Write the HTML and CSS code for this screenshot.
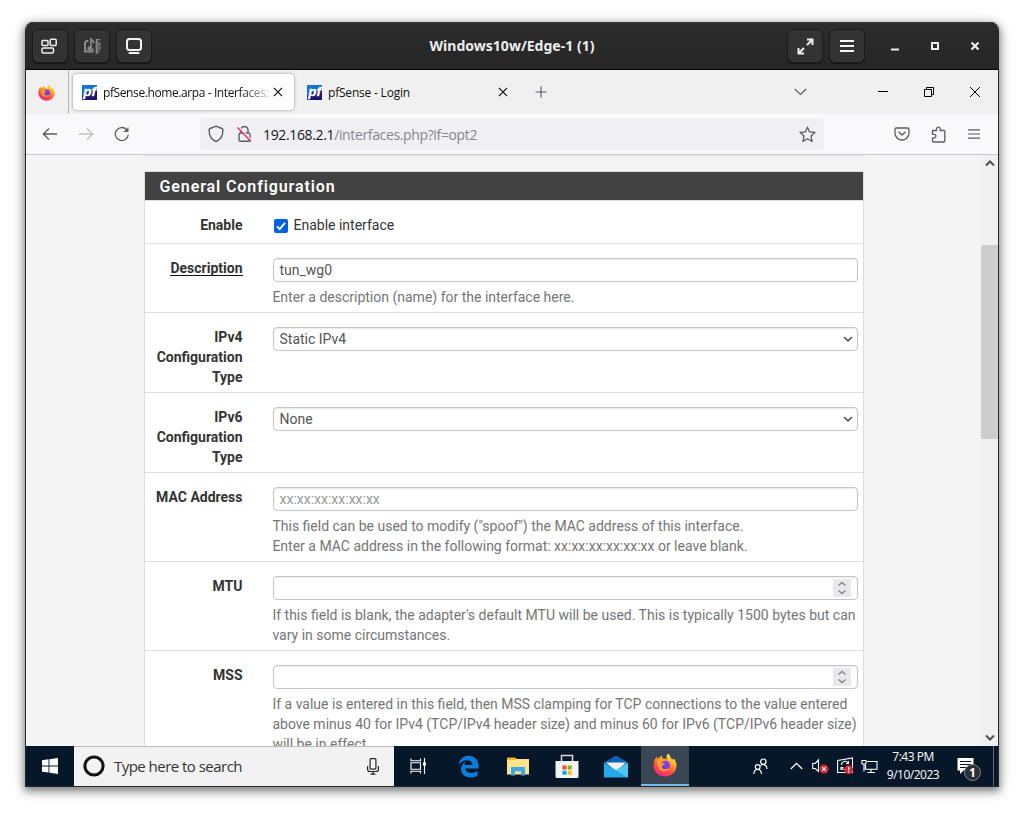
FILE: index.html
```html
<!DOCTYPE html>
<html lang="en">
<head>
<meta charset="utf-8">
<title>Windows10w/Edge-1 (1)</title>
<link rel="stylesheet" href="styles.css">
</head>
<body>
<svg width="0" height="0" class="defs">
  <defs>
    <linearGradient id="flame" x1="0.8" y1="0" x2="0.25" y2="1"><stop offset="0" stop-color="#fff44f"/><stop offset=".35" stop-color="#ffa62a"/><stop offset=".65" stop-color="#ff4f3c"/><stop offset="1" stop-color="#f5208a"/></linearGradient>
    <linearGradient id="globe" x1="0" y1="1" x2="1" y2="0"><stop offset="0" stop-color="#5b3fd6"/><stop offset="1" stop-color="#a03be8"/></linearGradient>
    <linearGradient id="pfbg" x1="0" y1="0" x2="0.5" y2="1"><stop offset="0" stop-color="#1475cf"/><stop offset=".5" stop-color="#1a6fd0"/><stop offset=".6" stop-color="#1f1a80"/><stop offset="1" stop-color="#1c1468"/></linearGradient>
    <symbol id="firefox" viewBox="0 0 24 24">
      <path fill="url(#flame)" d="M15 .5c1.500 1.200 2.600 2.900 3 4.800 1 .4 1.800.9 2.400 1.500l.5-1.300c2 2.700 3 5.200 2.600 8.300C22.700 19.600 18 23.500 12 23.500 5.700 23.500.6 18.700.5 12.500c0-3.200 1-6.300 3.300-9l.3 2.300C5 4.900 6 4.600 6.800 4.600L8.700 2.300l.8 3.200c1.600 0 3.200.4 4.200 1.200C13.200 4.300 13.500 2.200 15 .5z"/>
      <circle cx="12.600" cy="12.300" r="4.500" fill="url(#globe)"/>
      <path fill="#ff9b2b" d="M4 7.500c2.500-1.800 5.500-1.800 7.700.3-1.700.3-2.800 1.200-2.900 2.300l3.200.5c-.4 1.400-2 1.500-3.200 2.500-.5 2.300 1.500 3.500 3.700 3.100 1.200-.3 2.200-1 3.500-.7-1.200 2.600-4.400 3.700-7.200 2.500C4.900 16.200 3.400 11.500 4 7.500z"/>
    </symbol>
    <symbol id="pf" viewBox="0 0 15 15">
      <rect width="15" height="15" fill="url(#pfbg)"/>
      <text x="1.200" y="11" class="pf-text" textLength="12.800" lengthAdjust="spacingAndGlyphs">pf</text>
    </symbol>
    <symbol id="close" viewBox="0 0 10 10"><path d="M.9.9l8.200 8.200M9.100.9L.9 9.100" fill="none" stroke="currentColor" stroke-width="1.200"/></symbol>
    <symbol id="select-arrow" viewBox="0 0 10 6"><path d="M1 1l4 3.800L9 1" fill="none" stroke="currentColor" stroke-width="1.700"/></symbol>
    <symbol id="spin" viewBox="0 0 18 18"><path d="M5.500 6.500L9 3.500l3.500 3M5.500 11.500l3.500 3 3.500-3" fill="none" stroke="#85858c" stroke-width="1.400"/></symbol>
  </defs>
</svg>

<main class="window">
  <header class="titlebar">
    <div class="tb-group tb-left">
      <span class="tb-btn"><svg width="17" height="17" viewBox="0 0 17 17" fill="none" stroke="#eee" stroke-width="1.500"><rect x="1" y="2.500" width="6" height="5" rx="1"/><rect x="9.200" y="1.300" width="6" height="6.200" rx="1"/><rect x="1" y="10" width="11.500" height="5" rx="1.200"/></svg></span>
      <span class="tb-btn"><svg width="18" height="17" viewBox="0 0 18 17" fill="none" stroke="#898989"><path d="M5.500 3H3.500L2 4.500v9h7.500V10.500" stroke-width="2"/><path d="M8 11V1l3.300 4" stroke-width="1.700"/><circle cx="6.500" cy="10.500" r="1.800" fill="#898989"/><path d="M13.700 1v15" stroke-width="2"/><path d="M14 1.700h3.500M15 5h2v2h-2M15 9h2v2h-2M15 13.500h2" stroke-width="1.200"/></svg></span>
      <span class="tb-btn"><svg width="18" height="18" viewBox="0 0 18 18" fill="none" stroke="#f2f2f2" stroke-width="2"><rect x="2" y="2" width="14" height="11" rx="2.500"/><path d="M4.500 16h9" stroke-linecap="round"/></svg></span>
    </div>
    <h1 class="title">Windows10w/Edge-1 (1)</h1>
    <div class="tb-group tb-right">
      <span class="tb-btn"><svg width="17" height="17" viewBox="0 0 17 17" fill="none" stroke="#eee" stroke-width="2"><path d="M10 1.500h5.500V7M15 2l-5 5M1.500 10v5.500H7M2 15l5-5"/></svg></span>
      <span class="tb-btn"><svg width="16" height="14" viewBox="0 0 16 14" fill="none" stroke="#f4f4f4" stroke-width="2"><path d="M1 2h14M1 7h14M1 12h14"/></svg></span>
      <span class="wm"><svg width="10" height="10" viewBox="0 0 10 10"><path d="M1 8.500h8" stroke="#eee" stroke-width="2"/></svg></span>
      <span class="wm"><svg width="10" height="10" viewBox="0 0 10 10"><rect x="2" y="2" width="6" height="6" fill="none" stroke="#eee" stroke-width="2"/></svg></span>
      <span class="wm"><svg width="10" height="10" viewBox="0 0 10 10"><path d="M1.500 1.500l7 7M8.500 1.500l-7 7" stroke="#eee" stroke-width="2.200"/></svg></span>
    </div>
  </header>

  <nav class="tabs">
    <span class="pinned"><svg width="17" height="17"><use href="#firefox"/></svg></span>
    <div class="tab active"><svg width="15" height="15"><use href="#pf"/></svg><span class="tab-label fade">pfSense.home.arpa - Interfaces:</span><svg width="10" height="10"><use href="#close"/></svg></div>
    <div class="tab"><svg width="15" height="15"><use href="#pf"/></svg><span class="tab-label">pfSense - Login</span><svg width="10" height="10"><use href="#close"/></svg></div>
    <svg class="plus" width="12" height="12" viewBox="0 0 12 12"><path d="M6 .5v11M.5 6h11" stroke="#5b5b66" stroke-width="1.200"/></svg>
    <div class="win-controls">
      <svg class="chev" width="13" height="8" viewBox="0 0 13 8"><path d="M.8 1l5.700 5.500L12.200 1" fill="none" stroke="#5b5b66" stroke-width="1.200"/></svg>
      <span class="wc"><svg width="10" height="10" viewBox="0 0 10 10"><path d="M0 4.500h10" stroke="#000"/></svg></span>
      <span class="wc"><svg width="10" height="10" viewBox="0 0 10 10" fill="none" stroke="#000"><path d="M.5 2.500h7v7h-7zM2.500 2.500v-2h7v7h-2"/></svg></span>
      <span class="wc"><svg width="10" height="10" viewBox="0 0 10 10"><path d="M0 0l10 10M10 0L0 10" stroke="#000"/></svg></span>
    </div>
  </nav>

  <div class="toolbar">
    <span class="tool"><svg width="16" height="14" viewBox="0 0 16 14" fill="none" stroke="#5b5b66" stroke-width="1.300"><path d="M15 7H1.500M7 1.500L1.300 7 7 12.500"/></svg></span>
    <span class="tool"><svg width="16" height="14" viewBox="0 0 16 14" fill="none" stroke="#bfbfc5" stroke-width="1.300"><path d="M1 7h13.500M9 1.500l5.700 5.500L9 12.500"/></svg></span>
    <span class="tool"><svg width="16" height="16" viewBox="0 0 16 16" fill="none" stroke="#5b5b66" stroke-width="1.300"><path d="M14.300 8.700A6.500 6.500 0 1 1 12.500 3.500l1 1"/><path d="M14.500 1v5h-5z" fill="#5b5b66" stroke="none"/></svg></span>
    <div class="urlbar">
      <svg width="16" height="18" viewBox="0 0 16 18" fill="none" stroke="#5b5b66" stroke-width="1.400"><path d="M8 1.200l6 2.300c.9.300.9.600.9 1.500 0 4.500-1.400 9.500-6.900 11.500C2.500 14.500 1.100 9.500 1.100 5c0-.9 0-1.200.9-1.500z"/></svg>
      <svg class="lock" width="15" height="18" viewBox="0 0 15 18" fill="none" stroke="#5b5b66" stroke-width="1.400"><rect x="2" y="8" width="11" height="8.300" rx="1.500"/><path d="M4 8V5a3.500 3.500 0 0 1 7 0v3"/><path d="M2.500 2.500L14 15" stroke="#f0f0f4" stroke-width="1.500"/><path d="M.5 2.500L14 16.500" stroke="#e22850" stroke-width="1.300"/></svg>
      <span class="url">192.168.2.1<span class="path">/interfaces.php?if=opt2</span></span>
      <svg class="star" width="17" height="17" viewBox="0 0 17 17" fill="none" stroke="#5b5b66" stroke-width="1.300" stroke-linejoin="round"><path d="M8.500 1.200l2.100 4.700 5.300.6-3.900 3.500 1.100 5.400-4.600-2.700-4.600 2.700L5 10 1.100 6.500l5.300-.6z"/></svg>
    </div>
    <div class="tools-right">
      <span class="tool"><svg width="16" height="14" viewBox="0 0 16 14" fill="none" stroke="#5b5b66" stroke-width="1.300"><path d="M2.200 1h11.600q1.200 0 1.200 1.200V6a7 7 0 0 1-14 0V2.200Q1 1 2.200 1z"/><path d="M4.500 4.700L8 8l3.500-3.300"/></svg></span>
      <span class="tool"><svg width="15" height="17" viewBox="0 0 15 17" fill="none" stroke="#5b5b66" stroke-width="1.300" stroke-linejoin="round"><path d="M1.500 4.500h4V3a1.800 1.800 0 0 1 3.700 0v1.500h3.600q1 0 1 1v9.500q0 1-1 1H2.500q-1 0-1-1v-3.200h1.700a1.700 1.700 0 0 0 0-3.500H1.500z"/></svg></span>
      <span class="tool"><svg width="12" height="10" viewBox="0 0 12 10" stroke="#5b5b66" stroke-width="1.200"><path d="M0 .8h12M0 5h12M0 9.200h12"/></svg></span>
    </div>
  </div>

  <div class="viewport">
    <div class="page">
      <div class="previous-panel"></div>
      <section class="panel">
        <h2>General Configuration</h2>
        <div class="row first"><label>Enable</label><div class="field check"><svg width="14" height="14" viewBox="0 0 14 14"><rect width="14" height="14" rx="2" fill="#0060df"/><path d="M3 7.300l2.700 2.700L11 3.800" fill="none" stroke="#fff" stroke-width="1.900"/></svg><span>Enable interface</span></div></div>
        <div class="row"><label><span class="required">Description</span></label><div class="field"><div class="input">tun_wg0</div><p>Enter a description (name) for the interface here.</p></div></div>
        <div class="row"><label>IPv4 Configuration Type</label><div class="field"><div class="input select">Static IPv4<svg width="10" height="6"><use href="#select-arrow"/></svg></div></div></div>
        <div class="row"><label>IPv6 Configuration Type</label><div class="field"><div class="input select">None<svg width="10" height="6"><use href="#select-arrow"/></svg></div></div></div>
        <div class="row"><label>MAC Address</label><div class="field"><div class="input placeholder">xx:xx:xx:xx:xx:xx</div><p>This field can be used to modify ("spoof") the MAC address of this interface.<br>Enter a MAC address in the following format: xx:xx:xx:xx:xx:xx or leave blank.</p></div></div>
        <div class="row"><label>MTU</label><div class="field"><div class="input number"><svg width="18" height="18"><use href="#spin"/></svg></div><p>If this field is blank, the adapter's default MTU will be used. This is typically 1500 bytes but can<br>vary in some circumstances.</p></div></div>
        <div class="row"><label>MSS</label><div class="field"><div class="input number"><svg width="18" height="18"><use href="#spin"/></svg></div><p>If a value is entered in this field, then MSS clamping for TCP connections to the value entered<br>above minus 40 for IPv4 (TCP/IPv4 header size) and minus 60 for IPv6 (TCP/IPv6 header size)<br>will be in effect.</p></div></div>
      </section>
    </div>
    <div class="scrollbar">
      <svg width="10" height="7" viewBox="0 0 10 7"><path d="M1 5.500L5 1.500l4 4" fill="none" stroke="#505050" stroke-width="2"/></svg>
      <div class="track"><div class="thumb"></div></div>
      <svg width="10" height="7" viewBox="0 0 10 7"><path d="M1 1.500l4 4 4-4" fill="none" stroke="#505050" stroke-width="2"/></svg>
    </div>
  </div>

  <footer class="taskbar">
    <span class="task start"><svg width="16" height="16" viewBox="0 0 16 16" fill="#fff"><path d="M0 2.200l6.500-.9v6.200H0zM7.400 1.200L16 0v7.500H7.400zM0 8.400h6.500v6.200L0 13.700zM7.400 8.400H16V16l-8.600-1.200z"/></svg></span>
    <div class="search">
      <svg width="22" height="22" viewBox="0 0 22 22"><circle cx="11" cy="11" r="9.100" fill="none" stroke="#111" stroke-width="3"/></svg>
      <span>Type here to search</span>
      <svg class="mic" width="12" height="17" viewBox="0 0 12 17" fill="none" stroke="#222" stroke-width="1.200"><rect x="3.100" y=".6" width="5.800" height="10.500" rx="1"/><path d="M.6 8v3.200q0 2.300 2.300 2.300h6.200q2.300 0 2.300-2.300V8M6 13.500V16M3.500 16.200h5"/></svg>
    </div>
    <span class="task"><svg width="17" height="16" viewBox="0 0 17 16" fill="none" stroke="#fff" stroke-width="1.100"><path d="M1 .5v2.200h9.500V.5M1 15.500v-2.200h9.500v2.200M1 4.800h9.500v6.500H1zM14.500 0v16"/><path d="M13 4.500h3v3h-3z" fill="#fff" stroke="none"/></svg></span>
    <span class="task edge"><svg width="21" height="23" viewBox="0 0 21 23"><path fill="#0b7ddd" d="M.5 10.500C1.200 4.800 5 .8 10.800.8c6.300 0 9.800 4.700 9.800 10.200v2.600H7.300c.3 5 7.600 5.500 12.200 2.500v4.600C13.300 24.200 3 22.300 3 14.200c0-3.400 2-6.200 5-7.500-1 1-1.400 2-1.600 3.300h8c-.1-6.500-10.600-6.300-13.900.5z"/></svg></span>
    <span class="task"><svg width="22" height="19" viewBox="0 0 22 19"><path d="M0 1h8l2 1h12v15.500H0z" fill="#fde38a"/><path d="M0 .5h8.500v2.500H0z" fill="#f5b914"/><path d="M4 18.500V10h14v8.500h-4v-4.200H8v4.200z" fill="#3ba9e6"/></svg></span>
    <span class="task"><svg width="24" height="25" viewBox="0 0 24 25"><path d="M6.500 9V1.500h11V9" fill="none" stroke="#ddd" stroke-width="1.500"/><path d="M.5 7h23v15.500q0 1.500-1.500 1.500H2q-1.500 0-1.500-1.500z" fill="#f3f3f3"/><path d="M7.500 11.500h4v4h-4z" fill="#f25022"/><path d="M12.700 11.500h4v4h-4z" fill="#7fba00"/><path d="M7.500 16.700h4v4h-4z" fill="#00a4ef"/><path d="M12.700 16.700h4v4h-4z" fill="#ffb900"/></svg></span>
    <span class="task"><svg width="24" height="23" viewBox="0 0 24 23"><path d="M0 7.500L12 .5l12 7v4H0z" fill="#0f62b0"/><path d="M2 7.500h20l-10 9z" fill="#f2f2f2"/><path d="M0 7.700l12 7.600 12-7.600V22.500H0z" fill="#28a8ea"/><path d="M12 15.300l12-7.600V22.500z" fill="#50c8f4"/></svg></span>
    <span class="task current"><svg width="24" height="24"><use href="#firefox"/></svg></span>
    <div class="tray">
      <span class="people"><svg width="15" height="17" viewBox="0 0 15 17" fill="none" stroke="#fff" stroke-width="1.200"><circle cx="10.300" cy="3.700" r="2.700"/><circle cx="4.700" cy="9" r="2.400"/><path d="M.8 16c.2-3 1.600-4.500 3.900-4.500S8.300 13 8.500 16M7.500 7.500c2.700-2 6.200-.9 6.600 3.500"/></svg></span>
      <span class="up"><svg width="13" height="8" viewBox="0 0 13 8"><path d="M.8 7l5.700-5.700L12.200 7" fill="none" stroke="#fff" stroke-width="1.200"/></svg></span>
      <span class="snd"><svg width="17" height="16" viewBox="0 0 17 16"><path d="M.7 5.500h2.500L6.500 2v11.500L3.200 10.500H.7z" fill="none" stroke="#fff" stroke-width="1.100"/><circle cx="12" cy="11" r="4.500" fill="#d92732"/><path d="M10.200 9.200l3.600 3.600m0-3.600l-3.600 3.600" stroke="#fff" stroke-width="1.200"/></svg></span>
      <span class="upd"><svg width="17" height="18" viewBox="0 0 17 18" fill="none" stroke="#fff" stroke-width="1.100"><path d="M.6 3.500L15.500 1v14.500H.6z"/><path d="M11 6A3.500 3.500 0 0 0 4.500 8M4 11a3.500 3.500 0 0 0 4 1M11.500 4v2.500H9M4 13v-2.500h2.500"/><circle cx="11.700" cy="12.700" r="4.500" fill="#d92732" stroke="none"/><path d="M11.700 10v3.300M11.700 14.200v1.300" stroke-width="1.400"/></svg></span>
      <span class="net"><svg width="17" height="15" viewBox="0 0 17 15" fill="none" stroke="#fff" stroke-width="1.100"><path d="M6 2.500h10v7.700H4.500V6M1 1.500h4V5H1zM3 5v7.500M10 10.200v3M6.500 13.500h7.500"/></svg></span>
      <div class="clock"><span>7:43 PM</span><span>9/10/2023</span></div>
      <span class="note"><svg width="17" height="18" viewBox="0 0 17 18"><path d="M.5 1h16v12.500H6.500L3 17v-3.500H.5z" fill="#fff"/><path d="M3 4.500h11M3 7.500h11M3 10.500h8" stroke="#06172b" stroke-width="1.200"/></svg><b class="badge">1</b></span>
      <span class="desktop"></span>
    </div>
  </footer>
</main>
</body>
</html>
```
FILE: styles.css
```css
* { box-sizing: border-box; }
body { margin: 0; padding: 22px 25px 28px; height: 815px; background: #fff; overflow: hidden; }
svg { display: block; flex: none; }
.defs { position: absolute; }
.pf-text { font: italic bold 13px "Liberation Sans", sans-serif; fill: #fff; stroke: #fff; stroke-width: .3px; }

.window {
  width: 974px; height: 765px; border: 1px solid #26292c; border-top: 0;
  border-radius: 8px 8px 0 0; overflow: hidden; display: flex; flex-direction: column;
  box-shadow: 0 3px 9px 1px rgba(0,0,0,.48), 0 3px 20px rgba(0,0,0,.12);
  background: #f4f4f4;
}

.titlebar {
  height: 48px; flex: none; display: grid; grid-template-columns: 1fr auto 1fr; align-items: center;
  background: linear-gradient(#2c2c2c, #262626); border-bottom: 1px solid #050505;
  box-shadow: inset 0 1px #3b3b3b; color: #eee;
}
.tb-group { display: flex; align-items: center; gap: 6px; padding: 1px 0 0 6px; }
.tb-left svg { margin-left: -1px; }
.tb-right { justify-content: flex-end; padding: 1px 6px 0 0; }
.tb-btn {
  width: 36px; height: 34px; display: grid; place-items: center; background: #333;
  border: 1px solid #1b1b1b; border-radius: 6px; box-shadow: 0 1px #161616;
}
.title { margin: 0; font: bold 14px "Noto Sans", sans-serif; letter-spacing: .02px; }
.wm { width: 34px; height: 34px; display: grid; place-items: center; }
.wm:nth-child(3) { margin-left: 7px; }

.tabs { height: 44px; flex: none; display: flex; align-items: center; background: #f0f0f0; font: 12px "Open Sans", sans-serif; color: #111; }
.pinned { width: 43px; height: 44px; padding-left: 12px; display: flex; align-items: center; border-right: 1px solid #b4b4b8; }
.tab { width: 225px; height: 36px; padding: 0 14px 0 10px; display: flex; align-items: center; gap: 6px; }
.tab.active { width: 221px; padding: 0 11px 0 9px; margin: 0 3px 0 4px; background: #fff; border-radius: 4px; box-shadow: 0 0 3px rgba(0,0,0,.45); }
.tab-label { flex: 1; white-space: nowrap; letter-spacing: -.2px; }
.tab-label.fade { flex: 0 0 170px; margin-right: -6px; letter-spacing: -.4px; -webkit-mask-image: linear-gradient(90deg, #000 80%, transparent 102%); mask-image: linear-gradient(90deg, #000 80%, transparent 102%); }
.plus { margin-left: 13px; }
.win-controls { margin-left: auto; display: flex; align-items: center; }
.chev { margin-right: 53px; }
.wc { width: 46px; display: grid; place-items: center; }

.toolbar { height: 41px; flex: none; display: flex; align-items: center; padding: 0 6px; background: #f9f9fb; border-bottom: 1px solid #c9c9cd; }
.tool { width: 36px; height: 36px; display: grid; place-items: center; }
.urlbar { width: 624px; height: 32px; margin-left: 60px; padding: 0 8px; display: flex; align-items: center; border-radius: 4px; background: #f0f0f4; }
.lock { margin-left: 13px; }
.url { margin-left: 11px; font: 14px "Open Sans", sans-serif; letter-spacing: -.36px; color: #15141a; }
.path { color: #85858b; }
.star { margin-left: auto; }
.tools-right { margin-left: auto; display: flex; }

.viewport { flex: 1; min-height: 0; display: flex; }
.page { flex: 1; padding-left: 118px; overflow: hidden; background: #f4f4f4; font: 14px/20px Roboto, sans-serif; color: #333; }
.previous-panel { width: 720px; height: 1px; margin-bottom: 15px; background: #e6e6e6; box-shadow: 0 0 4px rgba(0,0,0,.12); }
.panel { width: 720px; border: 1px solid #ddd; background: #fff; }
.panel h2 { margin: 0; height: 29px; padding: 0 14.500px; font: 600 16px/30px Roboto, sans-serif; letter-spacing: .9px; color: #fff; background: #424242; border-bottom: 1px solid #ddd; }
.row { display: flex; padding: 14px 5px 5px 0; border-bottom: 1px solid #ddd; }
.row.first { padding-bottom: 8px; }
.row label { width: 97.500px; margin-right: 30.500px; padding-left: 8px; text-align: right; font-weight: 700; }
.required { display: inline-block; height: 18px; border-bottom: 1px solid #111; }
.field { flex: 1; white-space: nowrap; }
.field p { margin: 5px 0 0 -.6px; color: #757575; }
.check { display: flex; align-items: center; gap: 5.500px; padding-left: 1px; }
.check svg { margin-top: 2px; }
.input { height: 24px; padding: 0 5.500px; display: flex; align-items: center; border: 1px solid #c4c4c4; border-radius: 4px; color: #555; box-shadow: inset 0 1px 1px rgba(0,0,0,.08); }
.select, .number { justify-content: space-between; padding-right: 4px; }
.number { justify-content: flex-end; padding-right: 6px; }
.number svg { background: #e9e9ed; }
.placeholder { color: #999; }

.scrollbar { width: 17px; padding: 5px 0; display: flex; flex-direction: column; align-items: center; background: #f0f0f0; }
.track { flex: 1; align-self: stretch; padding-top: 78px; }
.thumb { height: 194px; background: #cdcdcd; }

.taskbar { height: 40px; flex: none; display: flex; background: #051729; color: #fff; font-family: "Open Sans", sans-serif; }
.task { width: 49px; height: 40px; display: grid; place-items: center; }
.start { width: 48px; }
.edge { margin-left: 1px; }
.current { width: 48px; margin-left: 1px; background: #3a4653; border-bottom: 2px solid #76b9ed; }
.search { width: 320px; display: flex; align-items: center; padding: 0 15px 0 9px; background: #f2f2f2; border-top: 1px solid #bbb; color: #333; font-size: 15px; letter-spacing: -.53px; }
.search span { margin: -2px 0 0 9px; }
.search svg { margin-top: -1px; }
.search .mic { margin-left: auto; }
.tray { flex: 1; display: flex; align-items: center; justify-content: flex-end; }
.people { margin-right: 22px; }
.up { margin-right: 9px; }
.snd { margin-right: 8px; }
.upd { margin-right: 7px; }
.clock { width: 62px; margin: 0 13px 0 4px; text-align: center; font-size: 12px; line-height: 18px; letter-spacing: -.5px; display: flex; flex-direction: column; }
.note { position: relative; width: 36px; }
.badge { position: absolute; left: 7px; top: 7px; width: 17px; height: 17px; border: 1px solid #888; border-radius: 50%; background: #2b3037; font-size: 12px; line-height: 15px; text-align: center; }
.desktop { width: 5px; height: 40px; border-left: 1px solid #5f6974; }
```
